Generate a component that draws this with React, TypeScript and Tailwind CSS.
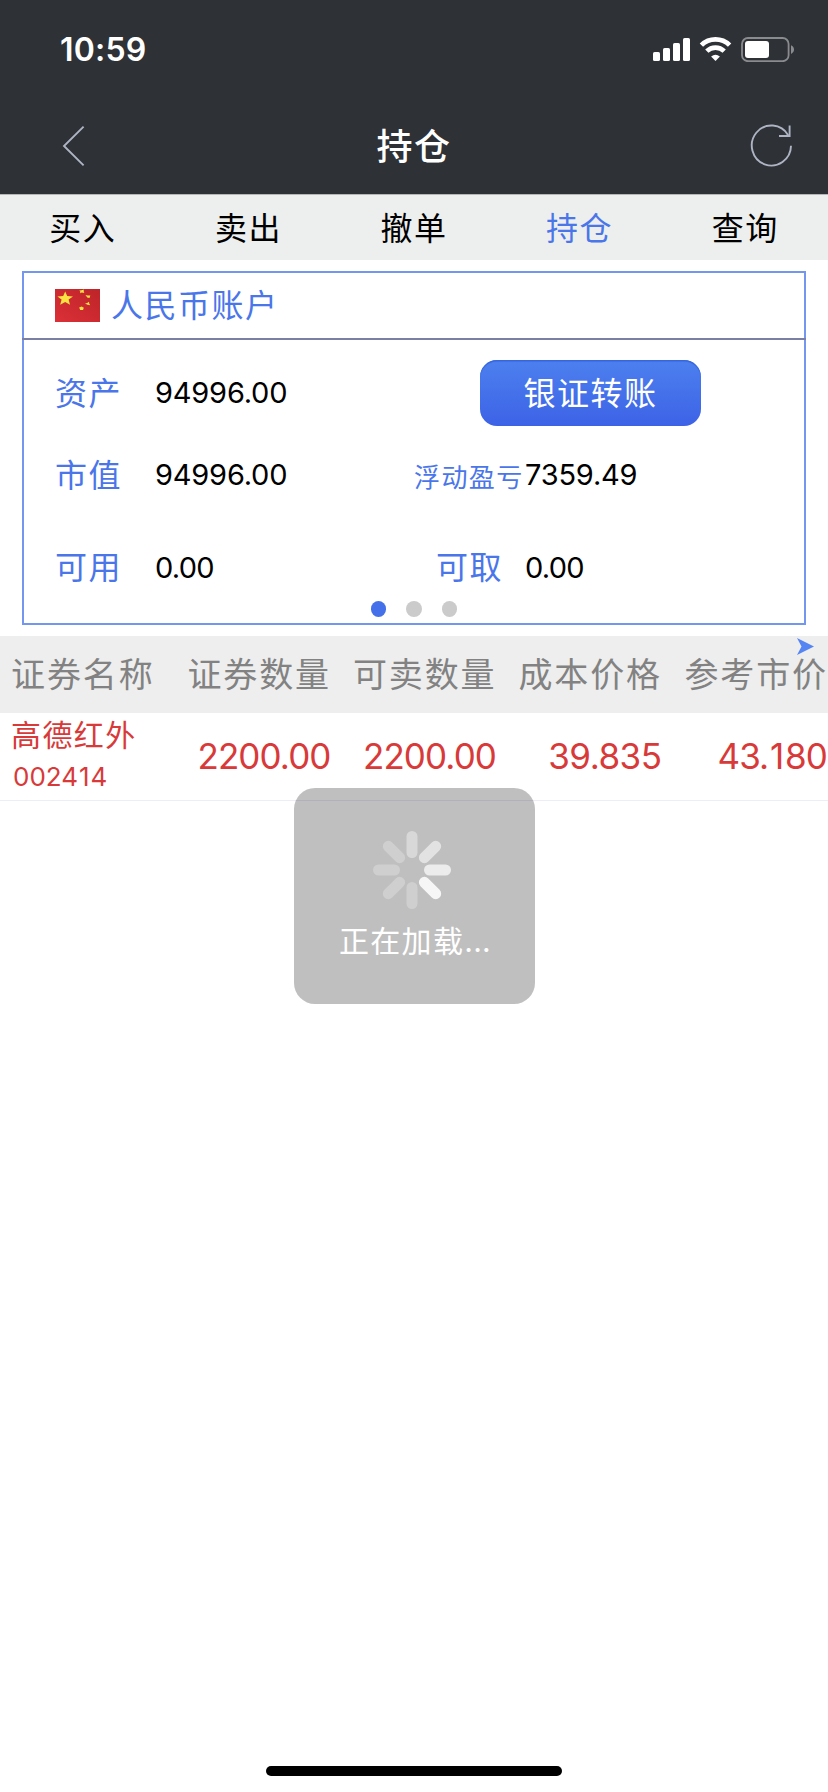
import type { ReactNode } from "react";

const TABS = ["买入", "卖出", "撤单", "持仓", "查询"];
const ACTIVE_TAB = "持仓";

const COLUMNS = [
  { label: "证券数量", value: "2200.00", tracking: "tracking-[-0.9px]" },
  { label: "可卖数量", value: "2200.00", tracking: "tracking-[-0.9px]" },
  { label: "成本价格", value: "39.835", tracking: "tracking-[-0.5px]" },
  { label: "参考市价", value: "43.180", tracking: "tracking-[-0.9px]" },
];

const SPOKES = [0.4, 0.55, 0.7, 0.85, 0.25, 0.25, 0.25, 0.25];

// Widens the narrow digit 1 a little so that figures keep an even rhythm.
function Digits({ text }: { text: string }) {
  return (
    <>
      {text.split("").map((ch, i) =>
        ch === "1" ? (
          <span key={i} className="inline-block w-[0.48em] text-center">
            1
          </span>
        ) : (
          ch
        ),
      )}
    </>
  );
}

function StatusBar() {
  return (
    <div className="flex h-[98px] items-center justify-between pl-[60px] pr-[34px]">
      <span className="pt-[2px] text-[32px] font-semibold leading-none tracking-[0.2px]">10:59</span>
      <svg width="142" height="26" viewBox="652 36 142 26" fill="#fff">
        <rect x="653" y="52" width="7" height="9" rx="1.6" />
        <rect x="663" y="48" width="7" height="13" rx="1.6" />
        <rect x="673" y="43" width="7" height="18" rx="1.6" />
        <rect x="683" y="38" width="7" height="23" rx="1.6" />
        <g fill="none" stroke="#fff">
          <path d="M701.4 45.1 A20.2 20.2 0 0 1 729.6 45.1" strokeWidth="4.8" />
          <path d="M706.8 51.2 A12.4 12.4 0 0 1 724.2 51.2" strokeWidth="4.6" />
        </g>
        <path d="M715.5 61 L711.1 56.6 Q715.5 52.8 719.9 56.6 Z" />
        <rect x="742" y="38" width="46.6" height="23.2" rx="6" fill="none" stroke="#8a8b8e" strokeWidth="1.8" />
        <rect x="745" y="41" width="24" height="17" rx="3" />
        <path d="M791 45.3 Q794 46.6 794 49.6 Q794 52.6 791 53.9 Z" fill="#8a8b8e" />
      </svg>
    </div>
  );
}

function NavBar() {
  return (
    <div className="flex h-[96px] items-center justify-between pl-[62px] pr-[35px]">
      <svg width="24" height="42" viewBox="62 125 24 42" fill="none" stroke="#aeb4c4" strokeWidth="1.9">
        <path d="M83.6 126.6 L64 146 L83.6 165.4" />
      </svg>
      <h1 className="-ml-[7px] pt-[1px] text-[36px] font-medium leading-none tracking-[1.5px]">持仓</h1>
      <svg width="44" height="44" viewBox="749 124 44 44" fill="none" stroke="#aeb4c4" strokeWidth="1.9">
        <path d="M791 145.8 A19.6 20 0 1 1 788.2 135.2" />
        <path d="M789.6 125.5 V136 H779" />
      </svg>
    </div>
  );
}

function Tabs() {
  return (
    <nav className="grid h-[66px] grid-cols-5 border-t border-[#b4b6b7] bg-[#edefee]">
      {TABS.map((tab) => (
        <button
          key={tab}
          className={
            tab === ACTIVE_TAB
              ? "pt-[2px] text-[32px] leading-none tracking-[1.5px] text-[#4a76ea]"
              : "pt-[2px] text-[32px] leading-none tracking-[1.5px] text-black"
          }
        >
          {tab}
        </button>
      ))}
    </nav>
  );
}

function Flag() {
  return (
    <svg width="45" height="33" viewBox="0 0 45 33">
      <defs>
        <linearGradient id="flag" x1="1" y1="0" x2="0" y2="1">
          <stop offset="0" stopColor="#bd2429" />
          <stop offset="1" stopColor="#dc3038" />
        </linearGradient>
      </defs>
      <rect width="45" height="33" fill="url(#flag)" />
      <g fill="#f8e340">
        <path d="M10.2 2.5 L12.2 7 L18 7.4 L13.6 10.6 L15 15.8 L10.2 13 L5.2 15.8 L6.6 10.6 L2.4 7.4 L8.2 7 Z" />
        <path d="M24.3 1.5 L26.6 1.3 L28.8 0.6 L28.7 2.2 L29.3 4 L26.8 3.6 L25 4.2 L25.4 2.8 Z" />
        <path d="M30.5 6 L32.5 6.6 L35.3 6.4 L34.5 9 L32.3 8.6 Z" />
        <path d="M30 14.6 L32.2 14 L34 12.8 L34.2 14.6 L35.2 16.2 L32.6 15.8 Z" />
        <path d="M24.2 18.4 L26.6 17.6 L28.8 18.8 L28 21 L25.2 21 Z" />
      </g>
    </svg>
  );
}

function Label({ children }: { children: ReactNode }) {
  return <span className="pt-[2px] text-[32px] leading-none tracking-[1.5px] text-[#4a76ea]">{children}</span>;
}

function Value({ children }: { children: ReactNode }) {
  return <span className="pb-[2px] text-[29px] leading-none tracking-[-0.2px] text-black">{children}</span>;
}

function AccountCard() {
  return (
    <section className="mx-[22px] mt-[11px] flex h-[354px] flex-col border-2 border-[#7496ef] bg-white">
      <div className="-mx-[2px] flex h-[67px] items-center gap-[11px] border-b-2 border-[#7a7fa3] pl-[33px]">
        <Flag />
        <span className="text-[32px] leading-none tracking-[1.5px] text-[#4a76ea]">人民币账户</span>
      </div>
      <div className="mt-[20px] grid h-[66px] grid-cols-[100px_325px_221px] items-center pl-[31px]">
        <Label>资产</Label>
        <Value>94996.00</Value>
        <button className="h-[66px] rounded-[17px] bg-linear-to-b from-[#4d80ef] to-[#3d62e6] pt-[2px] text-[32px] leading-none tracking-[1.5px] text-white shadow-[inset_0_1.5px_1px_#3565dc]">
          银证转账
        </button>
      </div>
      <div className="mt-[16px] grid h-[66px] grid-cols-[100px_259px_111px_1fr] items-center pl-[31px]">
        <Label>市值</Label>
        <Value>94996.00</Value>
        <span className="pt-[6px] text-[26px] leading-none tracking-[1.4px] text-[#4a76ea]">浮动盈亏</span>
        <Value>7359.49</Value>
      </div>
      <div className="mt-[26px] grid h-[66px] grid-cols-[100px_281px_89px_1fr] items-center pl-[31px]">
        <Label>可用</Label>
        <span className="text-[29px] leading-none tracking-[-0.7px] text-black">0.00</span>
        <Label>可取</Label>
        <span className="text-[29px] leading-none tracking-[-0.7px] text-black">0.00</span>
      </div>
      <div className="mt-[1px] flex justify-center gap-[20px]">
        <i className="size-[15.5px] rounded-full bg-[#4470e9]" />
        <i className="size-[15.5px] rounded-full bg-[#cbcbcb]" />
        <i className="size-[15.5px] rounded-full bg-[#cbcbcb]" />
      </div>
    </section>
  );
}

function Holdings() {
  return (
    <section className="mt-[11px]">
      <div className="relative grid h-[77px] grid-cols-[165px_166px_165.5px_165.5px_166px] items-center bg-[#eee] text-[34px] leading-none tracking-[1.9px] text-[#828282]">
        <span className="pl-[11px]">证券名称</span>
        {COLUMNS.map((c) => (
          <span key={c.label} className="whitespace-nowrap text-right">
            {c.label}
          </span>
        ))}
        <svg className="absolute left-[796px] top-[1px]" width="20" height="19" viewBox="0 0 20 19">
          <path d="M1 1 L18 9.5 L1 18 L5.5 9.5 Z" fill="#5585f3" />
        </svg>
      </div>
      <div className="grid h-[88px] grid-cols-[165px_165.5px_165.5px_165.5px_165.5px] items-center border-b border-[#ededf5] text-[#d83a3a]">
        <div className="flex h-full flex-col pl-[11px] pt-[7px]">
          <span className="text-[30px] leading-[30px] tracking-[1.4px]">高德红外</span>
          <span className="mt-[14px] whitespace-nowrap pl-[2px] text-[26px] leading-[26px]">
            <Digits text="002414" />
          </span>
        </div>
        {COLUMNS.map((c) => (
          <span key={c.label} className="text-right text-[35px] leading-none">
            <span className={c.tracking}>
              <Digits text={c.value} />
            </span>
          </span>
        ))}
      </div>
    </section>
  );
}

function LoadingToast() {
  return (
    <div className="absolute left-[294px] top-[788px] flex h-[216px] w-[241px] flex-col items-center rounded-[21px] bg-black/25 pt-[42px] text-white">
      <svg className="mr-[5px]" width="80" height="80" viewBox="-40 -40 80 80">
        {SPOKES.map((opacity, i) => (
          <rect
            key={i}
            x="-5.5"
            y="-39"
            width="11"
            height="27"
            rx="5.5"
            fill="#fff"
            fillOpacity={opacity}
            transform={`rotate(${i * 45})`}
          />
        ))}
      </svg>
      <span className="mt-[16px] pl-[1px] text-[30px] leading-none tracking-[1.3px]">
        正在加载<span className="tracking-[0.3px]">...</span>
      </span>
    </div>
  );
}

export default function App() {
  return (
    <div className="relative flex h-[1792px] w-[828px] flex-col overflow-hidden bg-white font-['Inter','Noto_Sans_CJK_SC',sans-serif]">
      <header className="bg-[#2e3136] text-white">
        <StatusBar />
        <NavBar />
      </header>
      <Tabs />
      <AccountCard />
      <Holdings />
      <div className="mx-auto mb-[16px] mt-auto h-[10px] w-[296px] rounded-full bg-black" />
      <LoadingToast />
    </div>
  );
}
